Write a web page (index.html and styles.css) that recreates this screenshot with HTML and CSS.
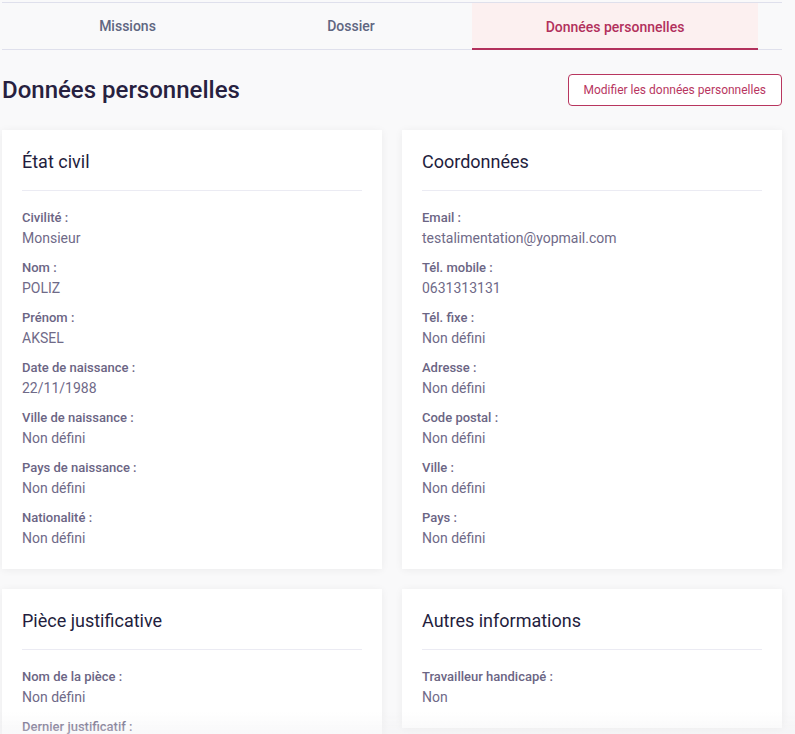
FILE: index.html
```html
<!DOCTYPE html>
<html lang="fr">

<head>
    <meta charset="UTF-8">
    <meta name="viewport" content="width=device-width, initial-scale=1.0">
    <title>Données personnelles</title>
    <link rel="stylesheet" href="styles.css">
</head>

<body>
    <div class="page">
        <nav class="tabs">
            <a class="tab tab-missions">Missions</a>
            <a class="tab tab-dossier">Dossier</a>
            <a class="tab tab-perso active">Données personnelles</a>
        </nav>

        <div class="page-header">
            <h1>Données personnelles</h1>
            <button class="btn-outline">Modifier les données personnelles</button>
        </div>

        <div class="cards">
            <section class="card">
                <h2>État civil</h2>
                <div class="fields">
                    <div class="field"><span class="label">Civilité :</span><span class="value">Monsieur</span></div>
                    <div class="field"><span class="label">Nom :</span><span class="value">POLIZ</span></div>
                    <div class="field"><span class="label">Prénom :</span><span class="value">AKSEL</span></div>
                    <div class="field"><span class="label">Date de naissance :</span><span class="value">22/11/1988</span></div>
                    <div class="field"><span class="label">Ville de naissance :</span><span class="value">Non défini</span></div>
                    <div class="field"><span class="label">Pays de naissance :</span><span class="value">Non défini</span></div>
                    <div class="field"><span class="label">Nationalité :</span><span class="value">Non défini</span></div>
                </div>
            </section>

            <section class="card">
                <h2>Coordonnées</h2>
                <div class="fields">
                    <div class="field"><span class="label">Email :</span><span class="value">testalimentation@yopmail.com</span></div>
                    <div class="field"><span class="label">Tél. mobile :</span><span class="value">0631313131</span></div>
                    <div class="field"><span class="label">Tél. fixe :</span><span class="value">Non défini</span></div>
                    <div class="field"><span class="label">Adresse :</span><span class="value">Non défini</span></div>
                    <div class="field"><span class="label">Code postal :</span><span class="value">Non défini</span></div>
                    <div class="field"><span class="label">Ville :</span><span class="value">Non défini</span></div>
                    <div class="field"><span class="label">Pays :</span><span class="value">Non défini</span></div>
                </div>
            </section>

            <section class="card">
                <h2>Pièce justificative</h2>
                <div class="fields">
                    <div class="field"><span class="label">Nom de la pièce :</span><span class="value">Non défini</span></div>
                    <div class="field"><span class="label">Dernier justificatif :</span><span class="value">Non défini</span></div>
                    <div class="field"><span class="label">Date d'expiration :</span><span class="value">Non défini</span></div>
                </div>
            </section>

            <section class="card">
                <h2>Autres informations</h2>
                <div class="fields">
                    <div class="field"><span class="label">Travailleur handicapé :</span><span class="value">Non</span></div>
                </div>
            </section>
        </div>
    </div>
    <div class="bottom-fade"></div>
</body>

</html>
```

FILE: styles.css
```css
body {
    margin: 0;
    padding: 0;
    font-family: Roboto, "Liberation Sans", Arial, sans-serif;
    background-color: #f9f9fa;
    color: #2b2545;
}

.page {
    width: 780px;
    margin: 2px 0 0 2px;
}

.tabs {
    display: grid;
    grid-template-columns: 205px 242px 286px;
    padding: 0 24px 0 23px;
    border-top: 1px solid #dfe0ec;
    border-bottom: 1px solid #dfe0ec;
    height: 46px;
}

.tab {
    display: flex;
    align-items: center;
    justify-content: center;
    font-size: 14px;
    font-weight: 500;
    color: #5f6681;
    cursor: pointer;
}

.tab.active {
    color: #b2305c;
    background-color: #fcf0f0;
    box-shadow: inset 0 -2px 0 #b2305c;
    margin-bottom: -1px;
}

.page-header {
    display: flex;
    align-items: center;
    justify-content: space-between;
    margin-top: 24px;
    height: 32px;
}

h1 {
    margin: 0;
    font-size: 24px;
    font-weight: 500;
    color: #27213f;
}

.btn-outline {
    height: 32px;
    padding: 0 15px;
    font-family: inherit;
    font-size: 12px;
    color: #b8365f;
    background: #fff;
    border: 1px solid #b8365f;
    border-radius: 4px;
    cursor: pointer;
}

.cards {
    display: grid;
    grid-template-columns: 1fr 1fr;
    gap: 20px;
    margin-top: 24px;
    align-items: start;
}

.card {
    background-color: #fff;
    padding: 21px 20px 21px;
    box-shadow: 0 1px 8px rgba(0, 0, 0, 0.06);
}

.card h2 {
    margin: 0;
    font-size: 18px;
    line-height: 22px;
    font-weight: 400;
    color: #231d3d;
    padding-bottom: 17px;
    border-bottom: 1px solid #ebebf3;
}

.fields {
    display: flex;
    flex-direction: column;
    gap: 11px;
    padding-top: 18px;
}

.field {
    display: flex;
    flex-direction: column;
}

.label {
    font-size: 13px;
    line-height: 17px;
    font-weight: 500;
    color: #6b6584;
}

.value {
    margin-top: 2px;
    font-size: 14px;
    line-height: 20px;
    color: #6f6a88;
}

.bottom-fade {
    position: fixed;
    left: 0;
    right: 0;
    bottom: 0;
    height: 22px;
    background: linear-gradient(to bottom, rgba(249, 249, 250, 0), rgba(240, 240, 242, 0.45));
    pointer-events: none;
}
```
